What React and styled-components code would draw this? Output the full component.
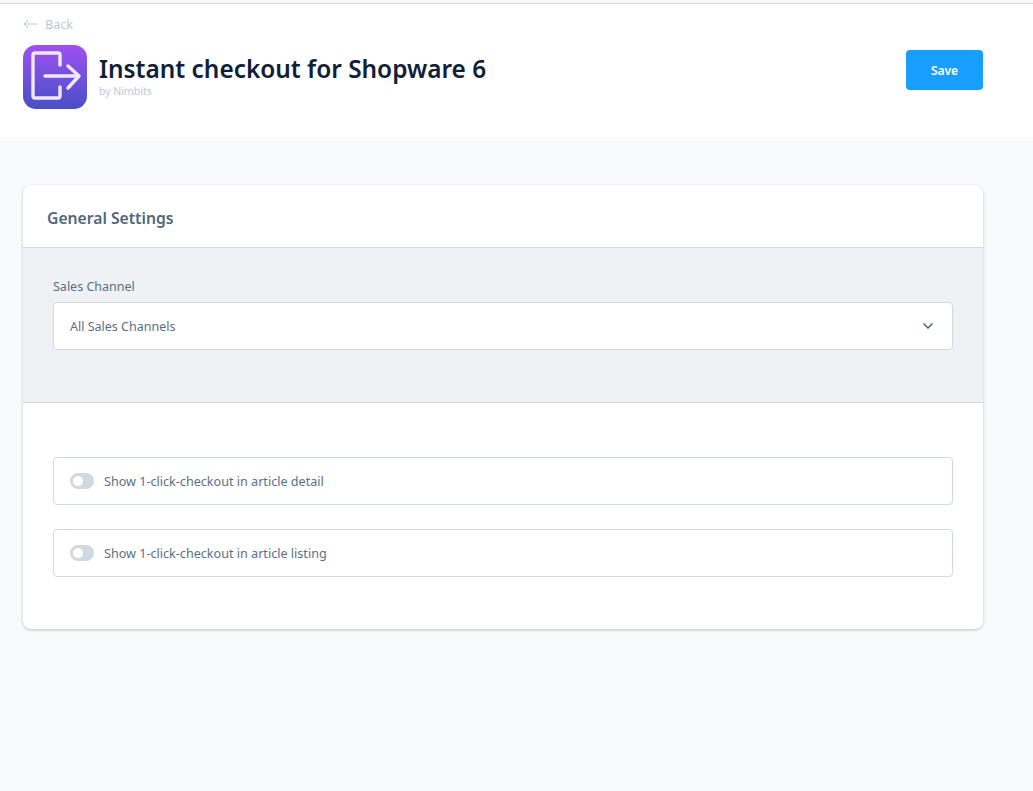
import React from "react";
import styled, { createGlobalStyle } from "styled-components";
import { ChevronDown } from "lucide-react";

const GlobalStyle = createGlobalStyle`
  html, body {
    margin: 0;
    padding: 0;
    height: 100%;
    overflow: hidden;
    background: #f9fafb;
    font-family: "Noto Sans", "Open Sans", sans-serif;
  }
`;

const Page = styled.div`
  width: 1033px;
  height: 791px;
  overflow: hidden;
  background: #f9fafb;
  padding-top: 3px;
  box-sizing: border-box;
`;

const Header = styled.header`
  display: flex;
  align-items: flex-start;
  justify-content: space-between;
  height: 134px;
  box-sizing: border-box;
  padding: 0 50px 0 23px;
  background: #fff;
  border-top: 1px solid #d8d8d8;
`;

const HeaderLeft = styled.div`
  display: flex;
  flex-direction: column;
`;

const BackLink = styled.a`
  display: flex;
  align-items: center;
  gap: 8px;
  height: 18px;
  margin-top: 11px;
  font-size: 12.5px;
  color: #bcc8d6;
`;

const AppRow = styled.div`
  display: flex;
  align-items: flex-start;
  gap: 12px;
  margin-top: 12px;
`;

const AppIcon = styled.div`
  width: 64px;
  height: 64px;
  border-radius: 13px;
  background: linear-gradient(180deg, #9f50f3 0%, #4750c4 100%);
  display: flex;
  align-items: center;
  justify-content: center;
`;

const AppText = styled.div`
  display: flex;
  flex-direction: column;
  padding-top: 6px;
`;

const Title = styled.h1`
  margin: 0;
  font-size: 24.4px;
  line-height: 35px;
  font-weight: 600;
  color: #0f2138;
  white-space: nowrap;
`;

const Vendor = styled.span`
  font-size: 10.5px;
  line-height: 11px;
  color: #bcc8d6;
`;

const SaveButton = styled.button`
  width: 77px;
  height: 40px;
  margin-top: 46px;
  border: none;
  border-radius: 4px;
  background: #189eff;
  color: #fff;
  font-family: inherit;
  font-size: 12px;
  font-weight: 600;
`;

const Content = styled.main`
  padding: 48px 50px 0 23px;
`;

const Card = styled.section`
  background: #fff;
  border-radius: 8px;
  box-shadow: 0 1px 3px rgba(30, 50, 70, 0.28);
  overflow: hidden;
`;

const CardTitle = styled.h2`
  margin: 0;
  height: 63px;
  box-sizing: border-box;
  padding: 3px 0 0 24px;
  display: flex;
  align-items: center;
  font-size: 15.7px;
  font-weight: 600;
  color: #52667a;
  border-bottom: 1px solid #d1d9e0;
`;

const Toolbar = styled.div`
  height: 155px;
  box-sizing: border-box;
  padding: 30px 30px 0;
  background: #eff1f5;
  border-bottom: 1px solid #d1d9e0;
`;

const Label = styled.label`
  display: block;
  height: 24px;
  font-size: 12.5px;
  line-height: 18px;
  color: #5a6f85;
`;

const Select = styled.div`
  display: flex;
  align-items: center;
  justify-content: space-between;
  height: 48px;
  box-sizing: border-box;
  padding: 0 16px;
  background: #fff;
  border: 1px solid #d1d9e0;
  border-radius: 4px;
  font-size: 12.5px;
  color: #5a6f85;
`;

const Options = styled.div`
  display: flex;
  flex-direction: column;
  gap: 24px;
  padding: 54px 30px 52px;
`;

const OptionRow = styled.div`
  display: flex;
  align-items: center;
  gap: 10px;
  height: 48px;
  box-sizing: border-box;
  padding: 0 16px;
  border: 1px solid #d1d9e0;
  border-radius: 4px;
  font-size: 12.6px;
  color: #5a6f85;
`;

const Switch = styled.span`
  position: relative;
  width: 24px;
  height: 16px;
  border-radius: 8px;
  background: #d1d9e0;

  &::after {
    content: "";
    position: absolute;
    top: 3px;
    left: 3px;
    width: 10px;
    height: 10px;
    border-radius: 50%;
    background: #fff;
  }
`;

const LogoutIcon = () => (
  <svg width="64" height="64" viewBox="0 0 64 64" fill="none" stroke="#f1e8ff" strokeWidth="3.4" strokeLinecap="round" strokeLinejoin="round">
    <path d="M37 20V10a2 2 0 0 0-2-2H12a2 2 0 0 0-2 2v41a2 2 0 0 0 2 2h23a2 2 0 0 0 2-2v-9" />
    <path d="M22 31h33" />
    <path d="M45 21l11 10-11 12" />
  </svg>
);

const BackArrow = () => (
  <svg width="14" height="10" viewBox="0 0 14 10" fill="none" stroke="#bcc8d6" strokeWidth="1">
    <path d="M14 5H1" />
    <path d="M5 1L1 5l4 4" />
  </svg>
);

const options = [
  "Show 1-click-checkout in article detail",
  "Show 1-click-checkout in article listing",
];

export default function App() {
  return (
    <Page>
      <GlobalStyle />
      <Header>
        <HeaderLeft>
          <BackLink>
            <BackArrow />
            Back
          </BackLink>
          <AppRow>
            <AppIcon>
              <LogoutIcon />
            </AppIcon>
            <AppText>
              <Title>Instant checkout for Shopware 6</Title>
              <Vendor>by Nimbits</Vendor>
            </AppText>
          </AppRow>
        </HeaderLeft>
        <SaveButton>Save</SaveButton>
      </Header>
      <Content>
        <Card>
          <CardTitle>General Settings</CardTitle>
          <Toolbar>
            <Label>Sales Channel</Label>
            <Select>
              All Sales Channels
              <ChevronDown size={16} color="#52667a" strokeWidth={2.5} />
            </Select>
          </Toolbar>
          <Options>
            {options.map((text) => (
              <OptionRow key={text}>
                <Switch />
                {text}
              </OptionRow>
            ))}
          </Options>
        </Card>
      </Content>
    </Page>
  );
}
